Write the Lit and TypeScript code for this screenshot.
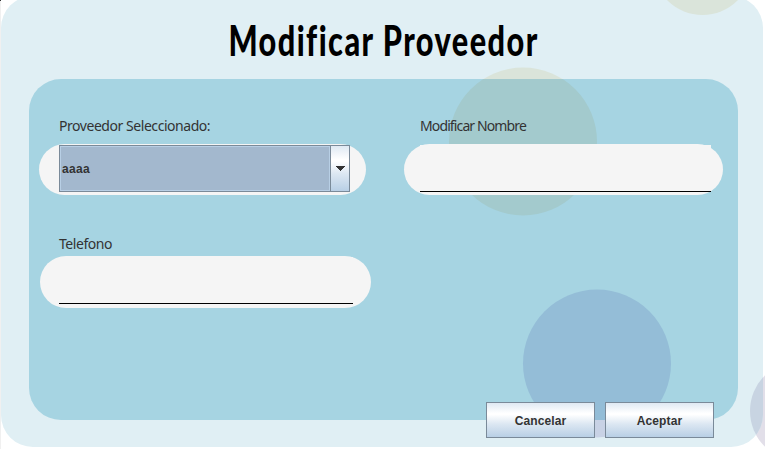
import { LitElement, html, css } from "lit";
import { customElement } from "lit/decorators.js";

@customElement("app-root")
export class AppRoot extends LitElement {
  static styles = css`
    :host {
      display: block;
      position: relative;
      width: 765px;
      height: 449px;
      overflow: hidden;
      background: #fff;
      font-family: "Noto Sans", sans-serif;
      color: #333;
    }
    * { box-sizing: border-box; }
    .backdrop { position: absolute; inset: 0; display: block; }
    .page {
      position: relative;
      height: 449px;
      padding: 0 27px 0 29px;
      display: flex;
      flex-direction: column;
    }
    .title {
      margin: 0;
      height: 79px;
      padding-top: 12px;
      font: 900 42px/56px Lato, "Open Sans", sans-serif;
      color: #000;
      text-align: center;
      white-space: nowrap;
      letter-spacing: 2px;
    }
    .title span {
      display: inline-block;
      transform: scaleX(0.73);
      transform-origin: center;
      margin: 0 -100px;
    }
    .form {
      height: 341px;
      padding: 36px 15px 0 10px;
      display: grid;
      grid-template-columns: 365px 319px;
      grid-template-rows: 118px 120px;
    }
    .label {
      display: block;
      height: 29px;
      font-size: 14px;
      line-height: 21px;
      white-space: nowrap;
      padding-left: 20px;
      letter-spacing: -0.45px;
    }
    .label.near { padding-left: 16px; letter-spacing: -0.88px; }
    .pill {
      height: 51px;
      border-radius: 26px;
      background: #f5f5f5;
      padding: 1px 12px 0 16px;
    }
    .pill.combo { width: 327px; padding: 1px 16px 0 20px; }
    .pill.phone { width: 331px; height: 52px; margin: -6px 0 0 1px; padding: 1px 18px 0 19px; }
    .input { height: 47px; background: #f5f5f5; border-bottom: 1px solid #000; }
    .select {
      height: 47px;
      display: flex;
      border: 1px solid #7a8a99;
      font: bold 12px/46px "Liberation Sans", Arial, sans-serif;
    }
    .value {
      flex: 1;
      border: 1px solid #b8cfe5;
      background: #a3b8ce;
      padding-left: 1px;
      line-height: 44px;
      letter-spacing: 0.3px;
    }
    .arrow {
      width: 19px;
      border-left: 1px solid #7a8a99;
      background: linear-gradient(#dfe9f3 0, #fff 30%, #fff 34%, #dce7f2 62%, #b8cfe5 100%);
      display: flex;
      align-items: center;
      justify-content: center;
    }
    .actions {
      margin-top: -18px;
      padding-right: 24px;
      display: flex;
      justify-content: flex-end;
      gap: 10px;
    }
    button {
      width: 109px;
      height: 36px;
      padding: 0;
      border: 1px solid #7a8a99;
      border-radius: 0;
      background: linear-gradient(#dfe9f3 0, #fff 30%, #fff 34%, #dce7f2 62%, #b8cfe5 100%);
      color: #333;
      font: bold 12px/36px "Liberation Sans", Arial, sans-serif;
      letter-spacing: 0.1px;
    }
  `;

  render() {
    return html`
      <svg class="backdrop" width="765" height="449" viewBox="0 0 765 449">
        <defs>
          <clipPath id="card"><rect x="1" y="-4" width="762" height="451" rx="32" /></clipPath>
          <clipPath id="panel"><rect x="29" y="79" width="709" height="341" rx="32" /></clipPath>
        </defs>
        <rect width="1" height="449" fill="#f0f0f0" />
        <rect width="1" height="1" fill="#333" />
        <circle cx="800" cy="411" r="50" fill="#e2dfe9" />
        <g clip-path="url(#card)">
          <rect width="765" height="449" fill="#e0eff4" />
          <circle cx="702.5" cy="-34.5" r="49.5" fill="#dae4da" />
          <circle cx="523" cy="141.5" r="74" fill="#dae4da" />
          <circle cx="597" cy="363.5" r="74" fill="#c8d2e5" />
          <circle cx="800" cy="411" r="50" fill="#c8d4e2" />
        </g>
        <g clip-path="url(#panel)">
          <rect width="765" height="449" fill="#a6d4e2" />
          <circle cx="523" cy="141.5" r="74" fill="#a3cacd" />
          <circle cx="597" cy="363.5" r="74" fill="#94bdd7" />
        </g>
      </svg>
      <div class="page">
        <h1 class="title"><span>Modificar Proveedor</span></h1>
        <div class="form">
          <div>
            <span class="label">Proveedor Seleccionado:</span>
            <div class="pill combo">
              <div class="select">
                <div class="value">aaaa</div>
                <div class="arrow">
                  <svg width="10" height="5" viewBox="0 0 10 5" shape-rendering="crispEdges">
                    <path d="M0 0H10L5 5Z" fill="#333" />
                  </svg>
                </div>
              </div>
            </div>
          </div>
          <div>
            <span class="label near">Modificar Nombre</span>
            <div class="pill"><div class="input"></div></div>
          </div>
          <div>
            <span class="label">Telefono</span>
            <div class="pill phone"><div class="input"></div></div>
          </div>
        </div>
        <div class="actions">
          <button>Cancelar</button>
          <button>Aceptar</button>
        </div>
      </div>
    `;
  }
}
